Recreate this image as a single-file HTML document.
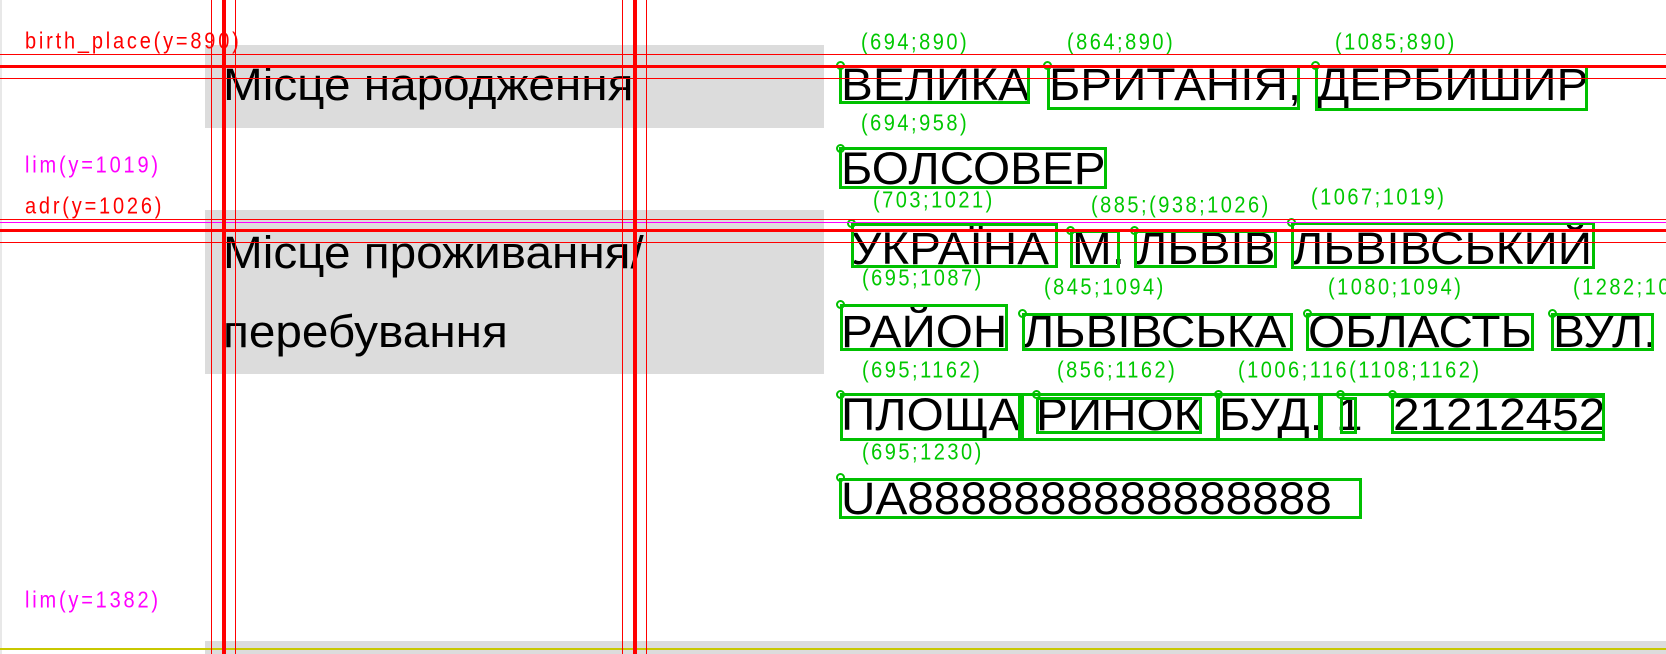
<!DOCTYPE html>
<html><head><meta charset="utf-8"><style>
*{margin:0;padding:0}
body{width:1666px;height:654px;position:relative;overflow:hidden;background:#fff;font-family:"Liberation Sans",sans-serif}
.a{position:absolute}
.g{background:#dcdcdc}
.t{position:absolute;font-size:45px;line-height:45px;color:#000;white-space:nowrap;transform:scaleX(1.06);transform-origin:0 0}
.l{position:absolute;font-size:20px;line-height:20px;letter-spacing:2.5px;white-space:nowrap;color:#00c800;transform:scaleY(1.15);transform-origin:0 0}
.b{position:absolute;border:3px solid #00c000;box-sizing:border-box}
.c{position:absolute;width:9px;height:9px;border:2px solid #00c000;border-radius:50%;box-sizing:border-box}
.h{position:absolute;left:0;width:1666px;background:#ff0000}
.v{position:absolute;top:0;height:654px;background:#ff0000}
.r{position:absolute;font-size:20px;line-height:20px;letter-spacing:2.8px;color:#ff0000;white-space:nowrap;transform:scaleY(1.15);transform-origin:0 0}
</style></head><body>
<div class="a" style="left:0;top:0;width:2px;height:654px;background:#e8e8e8"></div>
<div class="a g" style="left:205px;top:45px;width:619px;height:83px"></div>
<div class="a g" style="left:205px;top:210px;width:619px;height:164px"></div>
<div class="a g" style="left:205px;top:641px;width:1461px;height:13px"></div>
<div class="a" style="left:0;top:648px;width:1666px;height:2px;background:#c8c800"></div>

<div class="t" style="left:223px;top:62px">Місце народження</div>
<div class="t" style="left:223px;top:230px">Місце проживання/</div>
<div class="t" style="left:223px;top:309px">перебування</div>

<div class="t" style="left:841px;top:62px">ВЕЛИКА</div>
<div class="t" style="left:1049px;top:62px">БРИТАНІЯ,</div>
<div class="t" style="left:1317px;top:62px">ДЕРБИШИР</div>
<div class="t" style="left:841px;top:146px">БОЛСОВЕР</div>
<div class="t" style="left:851px;top:226px">УКРАЇНА</div>
<div class="t" style="left:1072px;top:226px">М.</div>
<div class="t" style="left:1136px;top:226px">ЛЬВІВ</div>
<div class="t" style="left:1292px;top:226px">ЛЬВІВСЬКИЙ</div>
<div class="t" style="left:841px;top:309px">РАЙОН</div>
<div class="t" style="left:1023px;top:309px">ЛЬВІВСЬКА</div>
<div class="t" style="left:1308px;top:309px">ОБЛАСТЬ</div>
<div class="t" style="left:1553px;top:309px">ВУЛ.</div>
<div class="t" style="left:841px;top:392px">ПЛОЩА</div>
<div class="t" style="left:1036px;top:392px">РИНОК</div>
<div class="t" style="left:1219px;top:392px">БУД.</div>
<div class="t" style="left:1336px;top:392px">1</div>
<div class="t" style="left:1393px;top:392px">21212452</div>
<div class="t" style="left:841px;top:476px">UA8888888888888888</div>

<div class="b" style="left:839px;top:65px;width:191px;height:39px"></div>
<div class="b" style="left:1047px;top:65px;width:253px;height:45px"></div>
<div class="b" style="left:1315px;top:65px;width:273px;height:46px"></div>
<div class="b" style="left:839px;top:147px;width:268px;height:42px"></div>
<div class="b" style="left:851px;top:223px;width:207px;height:45px"></div>
<div class="b" style="left:1070px;top:230px;width:50px;height:38px"></div>
<div class="b" style="left:1134px;top:230px;width:143px;height:38px"></div>
<div class="b" style="left:1291px;top:222px;width:304px;height:47px"></div>
<div class="b" style="left:840px;top:304px;width:168px;height:47px"></div>
<div class="b" style="left:1022px;top:313px;width:271px;height:38px"></div>
<div class="b" style="left:1306px;top:313px;width:228px;height:38px"></div>
<div class="b" style="left:1551px;top:313px;width:103px;height:38px"></div>
<div class="b" style="left:840px;top:393px;width:181px;height:48px"></div>
<div class="b" style="left:1021px;top:393px;width:198px;height:48px"></div>
<div class="b" style="left:1036px;top:397px;width:166px;height:37px"></div>
<div class="b" style="left:1217px;top:393px;width:104px;height:48px"></div>
<div class="b" style="left:1320px;top:393px;width:285px;height:48px"></div>
<div class="b" style="left:1340px;top:397px;width:17px;height:37px"></div>
<div class="b" style="left:1391px;top:395px;width:214px;height:39px"></div>
<div class="b" style="left:839px;top:478px;width:523px;height:41px"></div>

<div class="c" style="left:836px;top:61px"></div>
<div class="c" style="left:1043px;top:61px"></div>
<div class="c" style="left:1311px;top:61px"></div>
<div class="c" style="left:836px;top:144px"></div>
<div class="c" style="left:847px;top:219px"></div>
<div class="c" style="left:1066px;top:226px"></div>
<div class="c" style="left:1130px;top:226px"></div>
<div class="c" style="left:1287px;top:218px"></div>
<div class="c" style="left:836px;top:300px"></div>
<div class="c" style="left:1018px;top:309px"></div>
<div class="c" style="left:1303px;top:309px"></div>
<div class="c" style="left:1548px;top:309px"></div>
<div class="c" style="left:836px;top:390px"></div>
<div class="c" style="left:1032px;top:390px"></div>
<div class="c" style="left:1214px;top:390px"></div>
<div class="c" style="left:1336px;top:390px"></div>
<div class="c" style="left:1388px;top:390px"></div>
<div class="c" style="left:836px;top:473px"></div>

<div class="l" style="left:861px;top:31px">(694;890)</div>
<div class="l" style="left:1067px;top:31px">(864;890)</div>
<div class="l" style="left:1335px;top:31px">(1085;890)</div>
<div class="l" style="left:861px;top:112px">(694;958)</div>
<div class="l" style="left:873px;top:189px">(703;1021)</div>
<div class="l" style="left:1091px;top:194px">(885;(938;1026)</div>
<div class="l" style="left:1311px;top:186px">(1067;1019)</div>
<div class="l" style="left:862px;top:267px">(695;1087)</div>
<div class="l" style="left:1044px;top:276px">(845;1094)</div>
<div class="l" style="left:1328px;top:276px">(1080;1094)</div>
<div class="l" style="left:1573px;top:276px">(1282;1094)</div>
<div class="l" style="left:862px;top:359px">(695;1162)</div>
<div class="l" style="left:1057px;top:359px">(856;1162)</div>
<div class="l" style="left:1238px;top:359px">(1006;116(1108;1162)</div>
<div class="l" style="left:862px;top:441px">(695;1230)</div>

<div class="h" style="top:54px;height:1px"></div>
<div class="h" style="top:65px;height:3px"></div>
<div class="h" style="top:78px;height:1px"></div>
<div class="h" style="top:219px;height:1px"></div>
<div class="h" style="top:222px;height:1px;background:#ff00ff"></div>
<div class="h" style="top:229px;height:3px"></div>
<div class="h" style="top:242px;height:1px"></div>
<div class="v" style="left:211px;width:1px"></div>
<div class="v" style="left:222px;width:4px"></div>
<div class="v" style="left:235px;width:1px"></div>
<div class="v" style="left:622px;width:1px"></div>
<div class="v" style="left:633px;width:4px"></div>
<div class="v" style="left:646px;width:1px"></div>

<div class="r" style="left:25px;top:30px">birth_place(y=890)</div>
<div class="r" style="left:25px;top:154px;color:#ff00ff">lim(y=1019)</div>
<div class="r" style="left:25px;top:195px">adr(y=1026)</div>
<div class="r" style="left:25px;top:589px;color:#ff00ff">lim(y=1382)</div>
</body></html>
